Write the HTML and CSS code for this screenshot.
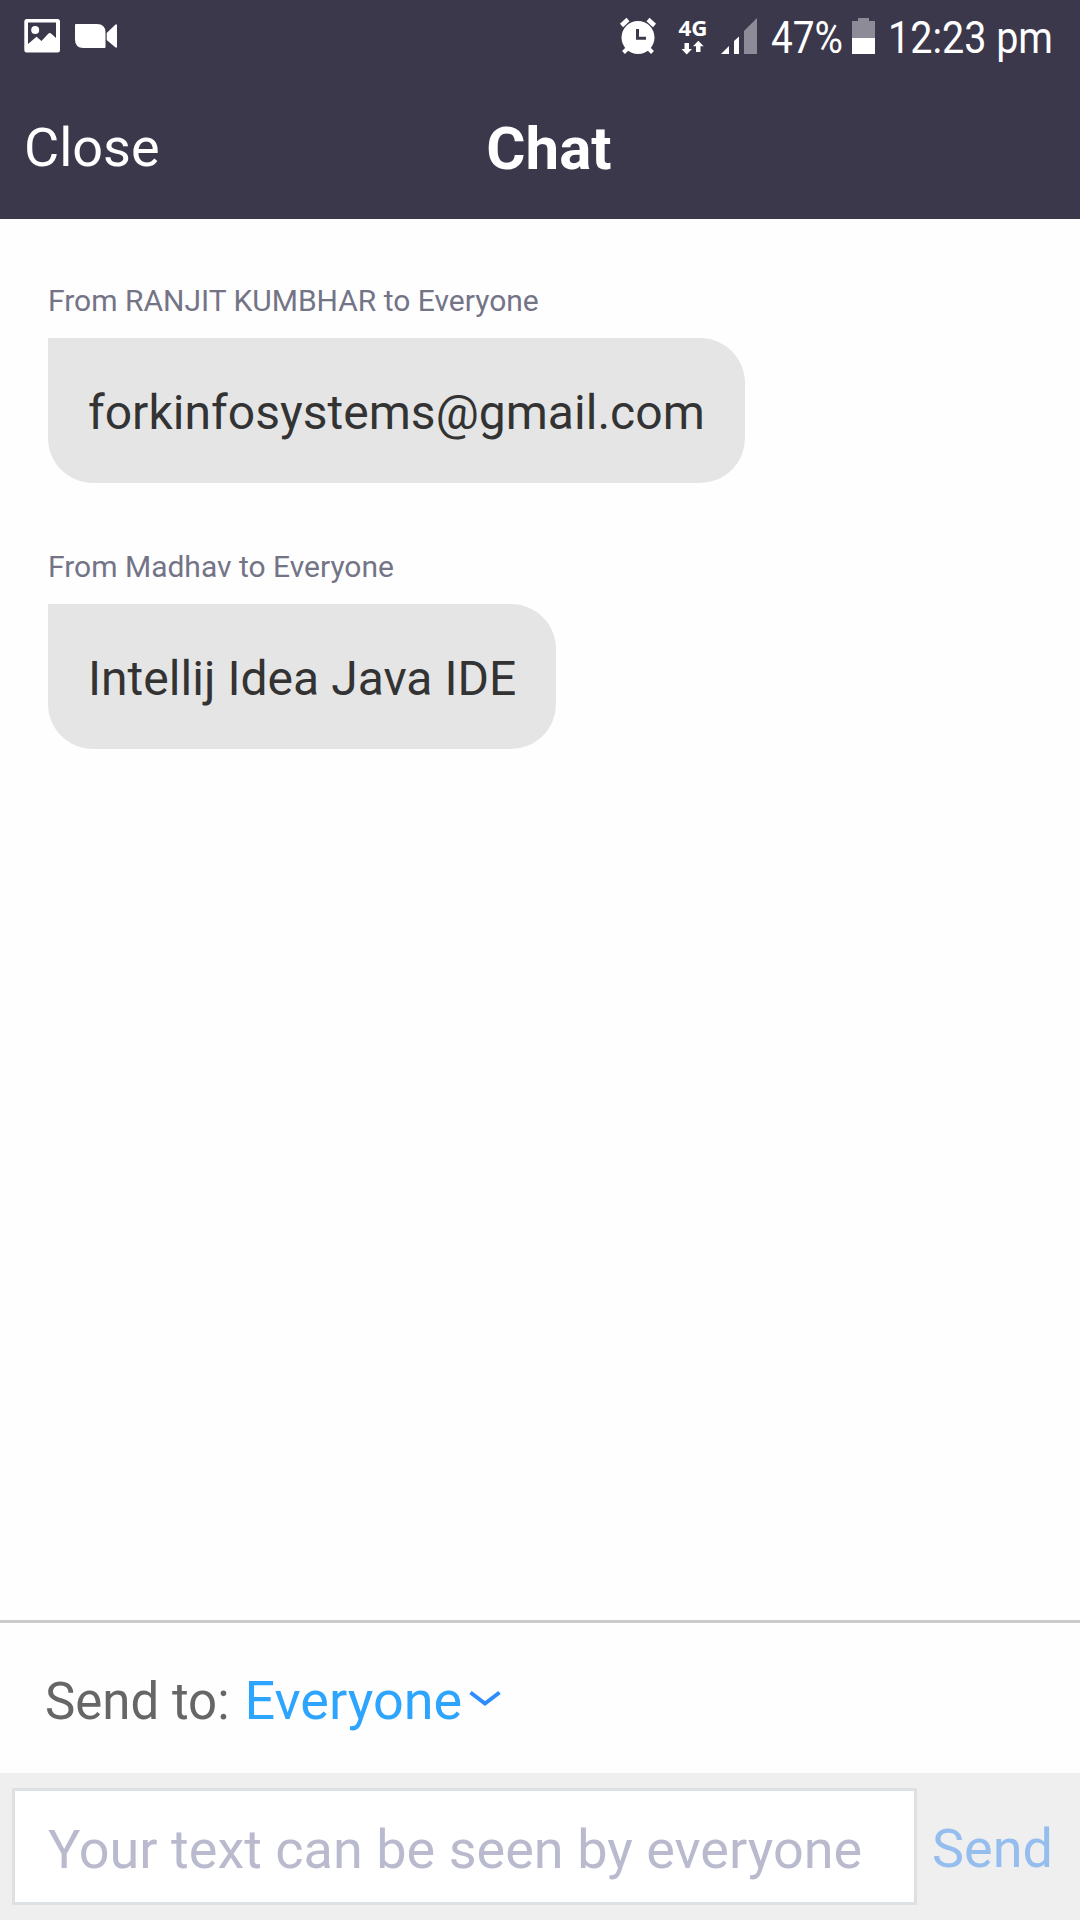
FILE: index.html
```html
<!DOCTYPE html>
<html lang="en">
<head>
<meta charset="utf-8">
<title>Chat</title>
<link rel="stylesheet" href="styles.css">
</head>
<body>
<div class="screen">
  <header class="header">
    <div class="status">
      <svg class="status-left" width="120" height="73" viewBox="0 0 120 73" fill="#fff">
        <path fill-rule="evenodd" d="M26.500 19H57.500Q60 19 60 21.500V50Q60 52.500 57.500 52.500H26.500Q24.300 52.500 24.300 50V21.500Q24.300 19 26.500 19ZM28 22.500V44L36.500 36.800L41.500 41L48 34Q49.800 32 51.600 34L56 38V22.500Z"/>
        <circle cx="35.200" cy="30" r="4"/>
        <path d="M76 24H97Q105.500 24 105.500 32.500V47Q105.500 48 104.500 48H83.500Q75 48 75 39.500V25Q75 24 76 24ZM106.700 33L115.500 24.600H117V47.400H115.500L106.700 40Z"/>
      </svg>
      <svg class="status-right" width="480" height="73" viewBox="600 0 480 73" fill="#fff">
        <g>
          <circle cx="638" cy="37.500" r="16.500"/>
          <path d="M621.500 25.500L628 19.500M654.500 25.500L648 19.500" stroke="#fff" stroke-width="4.500"/>
          <path d="M628 48L623.500 52.500M648 48L652.500 52.500" stroke="#fff" stroke-width="4"/>
          <path d="M637.500 29V38.200H646" fill="none" stroke="#3b384c" stroke-width="3"/>
        </g>
        <text class="network" x="678.500" y="36" textLength="29" lengthAdjust="spacingAndGlyphs">4G</text>
        <path d="M684.500 43H689V49H692L686.700 54.500L681.500 49H684.500ZM696 52V46.200H693L698.300 40.700L703.700 46.200H700.500V52Z"/>
        <path d="M721 54L729 46V54ZM734 54V41L739 36.500V54Z"/>
        <path d="M744 54V31L757 18V54Z" fill="#8d8b98"/>
        <text class="status-text" x="771" y="53" textLength="72" lengthAdjust="spacingAndGlyphs">47%</text>
        <path d="M852 21H858V18H869V21H875V38H852Z" fill="#8d8b98"/>
        <rect x="852" y="38" width="23" height="16"/>
        <text class="status-text" x="888" y="53" textLength="165" lengthAdjust="spacingAndGlyphs">12:23 pm</text>
      </svg>
    </div>
    <nav class="nav">
      <span class="close">Close</span>
      <h1 class="title">Chat</h1>
    </nav>
  </header>

  <main class="messages">
    <section class="message">
      <div class="from">From RANJIT KUMBHAR to Everyone</div>
      <div class="bubble">forkinfosystems@gmail.com</div>
    </section>
    <section class="message">
      <div class="from">From Madhav to Everyone</div>
      <div class="bubble">Intellij Idea Java IDE</div>
    </section>
  </main>

  <div class="recipient">
    <span class="recipient-label">Send to:</span>
    <span class="recipient-name">Everyone</span>
    <svg class="chevron" width="32" height="18" viewBox="0 0 32 18" fill="none" stroke="#2d8cff" stroke-width="4"><path d="M1.500 2.500L16 13.500L30.500 2.500"/></svg>
  </div>

  <footer class="composer">
    <div class="field">Your text can be seen by everyone</div>
    <span class="send">Send</span>
  </footer>
</div>
</body>
</html>
```

FILE: styles.css
```css
* {
  box-sizing: border-box;
}

body {
  margin: 0;
  font-family: Roboto, "Liberation Sans", sans-serif;
  background: #fefefe;
}

.screen {
  display: flex;
  flex-direction: column;
  width: 1080px;
  height: 1920px;
  overflow: hidden;
  white-space: nowrap;
}

.header {
  height: 219px;
  background: #3b384c;
  color: #fff;
}

.status {
  display: flex;
  justify-content: space-between;
  height: 73px;
}

.status-text {
  font-size: 45px;
}

.network {
  font-family: "Noto Sans", sans-serif;
  font-size: 22px;
  font-weight: 700;
}

.nav {
  display: grid;
  grid-template-columns: 1fr auto 1fr;
  align-items: center;
  height: 146px;
  padding: 4px 6px 0 24px;
}

.close {
  padding-bottom: 2px;
  font-size: 54px;
}

.title {
  margin: 0;
  font-size: 60px;
  font-weight: 700;
}

.messages {
  display: flex;
  flex: 1;
  flex-direction: column;
  gap: 66px;
  padding: 64px 48px 0;
}

.message {
  display: flex;
  flex-direction: column;
  align-items: flex-start;
  gap: 19px;
}

.from {
  font-size: 30px;
  line-height: 36px;
  color: #747487;
}

.bubble {
  height: 145px;
  padding: 4px 40px 0;
  border-radius: 0 45px 45px 45px;
  background: #e5e5e5;
  color: #333;
  font-size: 48px;
  line-height: 141px;
  letter-spacing: 0.03px;
}

.recipient {
  display: flex;
  align-items: baseline;
  height: 153px;
  padding: 5px 0 0 45px;
  border-top: 3px solid #cacccc;
  line-height: 146px;
}

.recipient-label {
  color: #666;
  font-size: 51px;
}

.recipient-name {
  margin-left: 15px;
  color: #2da5ff;
  font-size: 54px;
}

.chevron {
  align-self: center;
  margin: 0 0 4px 7px;
}

.composer {
  display: flex;
  height: 147px;
  padding: 15px 0 15px 12px;
  background: #efefef;
}

.field {
  width: 905px;
  padding: 6px 0 0 33px;
  border: 3px solid #dde1e4;
  background: #fff;
  color: #babace;
  font-size: 54px;
  line-height: 105px;
  letter-spacing: 0.02px;
}

.send {
  padding: 4px 0 0 15px;
  color: #95bdee;
  font-size: 54px;
  line-height: 114px;
}
```
